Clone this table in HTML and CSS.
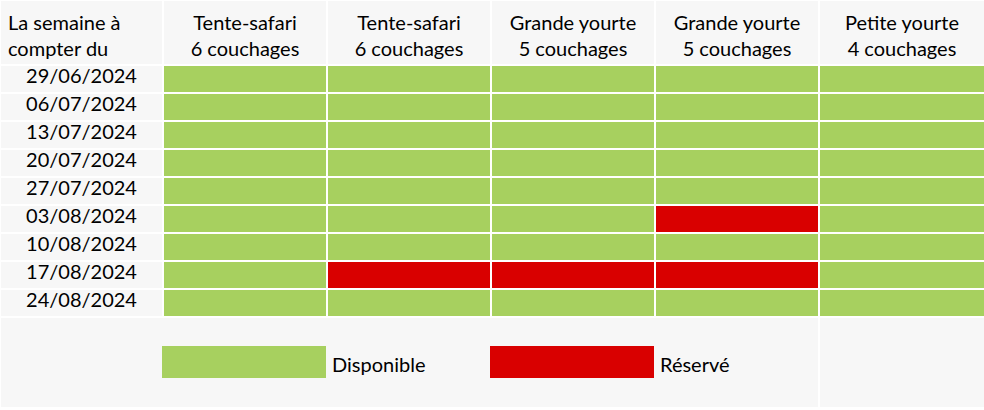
FILE: index.html
```html
<!DOCTYPE html>
<html lang="fr">
<head>
<meta charset="utf-8">
<title>Disponibilités</title>
<link rel="stylesheet" href="styles.css">
</head>
<body>
<div class="sheet">
  <div class="cell head first">La semaine à<br>compter du</div>
  <div class="cell head">Tente-safari<br>6 couchages</div>
  <div class="cell head">Tente-safari<br>6 couchages</div>
  <div class="cell head">Grande yourte<br>5 couchages</div>
  <div class="cell head">Grande yourte<br>5 couchages</div>
  <div class="cell head">Petite yourte<br>4 couchages</div>

  <div class="cell date"><span class="date-text">29/06/2024</span></div>
  <div class="cell free"></div><div class="cell free"></div><div class="cell free"></div><div class="cell free"></div><div class="cell free"></div>

  <div class="cell date"><span class="date-text">06/07/2024</span></div>
  <div class="cell free"></div><div class="cell free"></div><div class="cell free"></div><div class="cell free"></div><div class="cell free"></div>

  <div class="cell date"><span class="date-text">13/07/2024</span></div>
  <div class="cell free"></div><div class="cell free"></div><div class="cell free"></div><div class="cell free"></div><div class="cell free"></div>

  <div class="cell date"><span class="date-text">20/07/2024</span></div>
  <div class="cell free"></div><div class="cell free"></div><div class="cell free"></div><div class="cell free"></div><div class="cell free"></div>

  <div class="cell date"><span class="date-text">27/07/2024</span></div>
  <div class="cell free"></div><div class="cell free"></div><div class="cell free"></div><div class="cell free"></div><div class="cell free"></div>

  <div class="cell date"><span class="date-text">03/08/2024</span></div>
  <div class="cell free"></div><div class="cell free"></div><div class="cell free"></div><div class="cell booked"></div><div class="cell free"></div>

  <div class="cell date"><span class="date-text">10/08/2024</span></div>
  <div class="cell free"></div><div class="cell free"></div><div class="cell free"></div><div class="cell free"></div><div class="cell free"></div>

  <div class="cell date"><span class="date-text">17/08/2024</span></div>
  <div class="cell free"></div><div class="cell booked"></div><div class="cell booked"></div><div class="cell booked"></div><div class="cell free"></div>

  <div class="cell date"><span class="date-text">24/08/2024</span></div>
  <div class="cell free"></div><div class="cell free"></div><div class="cell free"></div><div class="cell free"></div><div class="cell free"></div>

  <div class="cell legend">
    <div class="legend-item">
      <span class="swatch free"></span>
      <span class="legend-label">Disponible</span>
    </div>
    <div class="legend-item">
      <span class="swatch booked"></span>
      <span class="legend-label">Réservé</span>
    </div>
  </div>
  <div class="cell"></div>
</div>
</body>
</html>
```

FILE: styles.css
```css
html, body {
  margin: 0;
  padding: 0;
  background: #ffffff;
}

body {
  font-family: Lato, "Open Sans", "Liberation Sans", sans-serif;
  font-size: 20px;
  color: #000000;
}

.sheet {
  display: grid;
  grid-template-columns: 161px repeat(4, 162px) 164px;
  grid-template-rows: 63px repeat(9, 26px) 89px;
  gap: 2px;
  padding: 1px 0 0 1px;
}

.cell {
  background: #f7f7f7;
  white-space: nowrap;
}

.head {
  padding-top: 8px;
  line-height: 26px;
  text-align: center;
}

.head.first {
  text-align: left;
  padding-left: 7px;
}

.date {
  text-align: center;
  line-height: 26px;
}

.date-text {
  display: block;
  margin-top: -4px;
}

.free {
  background: #a7d05f;
}

.booked {
  background: #d90000;
}

.legend {
  grid-column: 1 / 6;
  display: flex;
  align-items: flex-start;
  padding: 28px 0 0 161px;
}

.legend-item {
  display: flex;
  align-items: flex-start;
  width: 328px;
}

.swatch {
  display: block;
  width: 164px;
  height: 32px;
}

.legend-label {
  padding: 5px 0 0 6px;
  line-height: 26px;
}
```
